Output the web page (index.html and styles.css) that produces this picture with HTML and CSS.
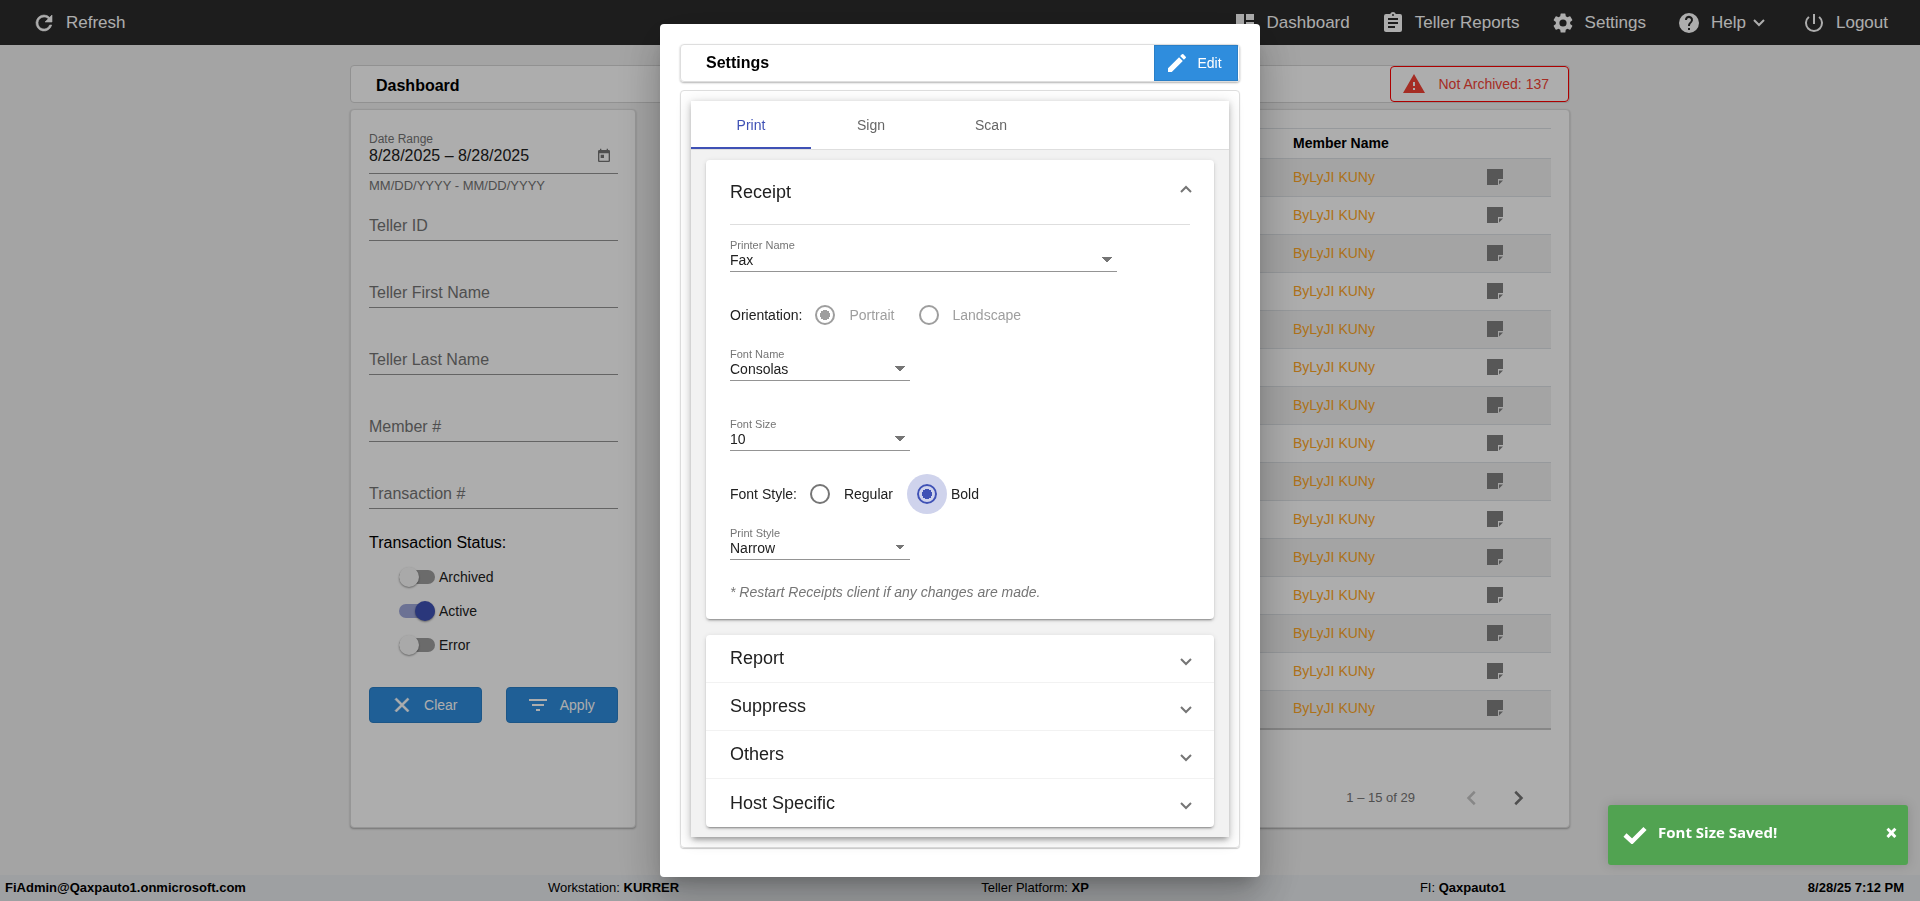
FILE: index.html
```html
<!DOCTYPE html>
<html lang="en">
<head>
    <meta charset="UTF-8">
    <meta name="viewport" content="width=device-width, initial-scale=1.0">
    <title>Dashboard</title>
    <link rel="stylesheet" href="styles.css">
</head>
<body>
    <svg class="sprite" aria-hidden="true">
        <symbol id="chevron" viewBox="0 0 12 8"><path d="M1 1l5 5 5-5" fill="none" stroke="currentColor" stroke-width="2"/></symbol>
        <symbol id="note" viewBox="0 0 16 16"><path d="M0 0h16v10h-5v6H0z"/><path d="M12 11.500h4L12 15.500z"/></symbol>
    </svg>

    <header class="navbar">
        <a class="nav-link" href="#">
            <svg class="icon refresh-icon" viewBox="0 0 24 24"><path stroke="currentColor" stroke-width=".6" d="M17.650 6.350A7.960 7.960 0 0 0 12 4a8 8 0 1 0 7.730 10h-2.080A6 6 0 1 1 12 6c1.660 0 3.140.69 4.220 1.780L13 11h7V4z"/></svg>
            Refresh
        </a>
        <nav class="nav-right">
            <a class="nav-link" href="#">
                <svg class="icon" viewBox="0 0 24 24"><path d="M3 13h8V3H3zm0 8h8v-6H3zm10 0h8V11h-8zm0-18v6h8V3z"/></svg>
                Dashboard
            </a>
            <a class="nav-link" href="#">
                <svg class="icon" viewBox="0 0 24 24"><path d="M19 3h-4.180A3 3 0 0 0 9.180 3H5a2 2 0 0 0-2 2v14c0 1.100.9 2 2 2h14a2 2 0 0 0 2-2V5a2 2 0 0 0-2-2zm-7 0a1 1 0 1 1 0 2 1 1 0 0 1 0-2zm2 14H7v-2h7zm3-4H7v-2h10zm0-4H7V7h10z"/></svg>
                Teller Reports
            </a>
            <a class="nav-link" href="#">
                <svg class="icon" viewBox="0 0 24 24"><path d="M19.140 12.940c.04-.3.060-.61.060-.94s-.02-.64-.07-.94l2.030-1.580a.49.49 0 0 0 .12-.61l-1.920-3.320a.49.49 0 0 0-.59-.22l-2.390.96a7 7 0 0 0-1.620-.94l-.36-2.540a.48.48 0 0 0-.48-.41h-3.840a.48.48 0 0 0-.47.41l-.36 2.540c-.59.24-1.130.57-1.620.94l-2.390-.96a.48.48 0 0 0-.59.22L2.740 8.870a.47.47 0 0 0 .12.61l2.030 1.580a6.200 6.200 0 0 0-.02 1.880l-2.030 1.580a.49.49 0 0 0-.12.61l1.920 3.320c.12.22.37.29.59.22l2.390-.96c.5.38 1.030.7 1.620.94l.36 2.540c.05.24.24.41.48.41h3.840c.24 0 .44-.17.47-.41l.36-2.540c.59-.24 1.130-.56 1.620-.94l2.390.96c.22.080.47 0 .59-.22l1.920-3.320a.47.47 0 0 0-.12-.61zM12 15.600a3.600 3.600 0 1 1 0-7.200 3.600 3.600 0 0 1 0 7.200z"/></svg>
                Settings
            </a>
            <a class="nav-link" href="#">
                <svg class="icon" viewBox="0 0 24 24"><path d="M12 2a10 10 0 1 0 0 20 10 10 0 0 0 0-20zm1 17h-2v-2h2zm2.070-7.750-.9.920C13.450 12.900 13 13.500 13 15h-2v-.5c0-1.100.45-2.100 1.170-2.830l1.240-1.260A2 2 0 1 0 10 9H8a4 4 0 1 1 7.070 2.250z"/></svg>
                <span class="with-caret">Help <svg class="chevron"><use href="#chevron"/></svg></span>
            </a>
            <a class="nav-link" href="#">
                <svg class="icon" viewBox="0 0 24 24"><path d="M13 3h-2v10h2zm4.830 2.170-1.420 1.420A7 7 0 1 1 7.580 6.580L6.170 5.170A9 9 0 1 0 17.830 5.170z"/></svg>
                Logout
            </a>
        </nav>
    </header>

    <main class="page">
        <div class="page-title">
            <h1 class="title">Dashboard</h1>
            <button class="btn-alert" type="button">
                <svg class="icon" viewBox="0 0 24 24"><path d="M1 21h22L12 2zm12-3h-2v-2h2zm0-4h-2v-4h2z"/></svg>
                Not Archived: 137
            </button>
        </div>
        <div class="columns">
            <form class="filters card">
                <div class="date-field">
                    <label class="date-label" for="range">Date Range</label>
                    <div class="date-row">
                        <input class="date-input" id="range" type="text" value="8/28/2025 – 8/28/2025">
                        <svg class="calendar" viewBox="0 0 24 24"><path d="M19 3h-1V1h-2v2H8V1H6v2H5a2 2 0 0 0-2 2v14c0 1.100.9 2 2 2h14a2 2 0 0 0 2-2V5a2 2 0 0 0-2-2zm0 16H5V8h14zM7 10h5v5H7z"/></svg>
                    </div>
                    <div class="hint">MM/DD/YYYY - MM/DD/YYYY</div>
                </div>
                <input class="field" type="text" placeholder="Teller ID" aria-label="Teller ID">
                <input class="field" type="text" placeholder="Teller First Name" aria-label="Teller First Name">
                <input class="field" type="text" placeholder="Teller Last Name" aria-label="Teller Last Name">
                <input class="field" type="text" placeholder="Member #" aria-label="Member #">
                <input class="field" type="text" placeholder="Transaction #" aria-label="Transaction #">
                <div class="status-title">Transaction Status:</div>
                <div class="toggles">
                    <label class="toggle"><input class="switch" type="checkbox">Archived</label>
                    <label class="toggle"><input class="switch" type="checkbox" checked>Active</label>
                    <label class="toggle"><input class="switch" type="checkbox">Error</label>
                </div>
                <div class="filter-buttons">
                    <button class="btn" type="button">
                        <svg class="icon" viewBox="0 0 24 24"><path stroke="currentColor" stroke-width=".6" d="M19 6.410 17.590 5 12 10.590 6.410 5 5 6.410 10.590 12 5 17.590 6.410 19 12 13.410 17.590 19 19 17.590 13.410 12z"/></svg>
                        Clear
                    </button>
                    <button class="btn" type="button">
                        <svg class="icon" viewBox="0 0 24 24"><path d="M10 18h4v-2h-4zM3 6v2h18V6zm3 7h12v-2H6z"/></svg>
                        Apply
                    </button>
                </div>
            </form>
            <section class="results card">
                <table class="table">
                    <thead>
                        <tr><th></th><th class="member">Member Name</th><th class="notes"></th></tr>
                    </thead>
                    <tbody id="rows"></tbody>
                </table>
                <div class="paginator">
                    <span>1 – 15 of 29</span>
                    <button class="page-btn prev" type="button" aria-label="Previous page" disabled><svg class="chevron"><use href="#chevron"/></svg></button>
                    <button class="page-btn next" type="button" aria-label="Next page"><svg class="chevron"><use href="#chevron"/></svg></button>
                </div>
            </section>
        </div>
    </main>

    <footer class="footer">
        <span><b>FiAdmin@Qaxpauto1.onmicrosoft.com</b></span>
        <span>Workstation: <b>KURRER</b></span>
        <span class="platform">Teller Platform: <b>XP</b></span>
        <span>FI: <b>Qaxpauto1</b></span>
        <span><b>8/28/25 7:12 PM</b></span>
    </footer>

    <div class="backdrop">
        <div class="dialog" role="dialog" aria-label="Settings">
            <div class="dialog-head">
                <h2 class="title">Settings</h2>
                <button class="btn btn-edit" type="button">
                    <svg class="icon" viewBox="0 0 24 24"><path d="M3 17.250V21h3.750L17.810 9.940l-3.750-3.750zM20.710 7.040a1 1 0 0 0 0-1.410l-2.340-2.340a1 1 0 0 0-1.410 0l-1.830 1.830 3.750 3.750z"/></svg>
                    Edit
                </button>
            </div>
            <div class="dialog-body">
                <div class="tab-group">
                    <div class="tabs" role="tablist">
                        <button class="tab active" type="button" role="tab">Print</button>
                        <button class="tab" type="button" role="tab">Sign</button>
                        <button class="tab" type="button" role="tab">Scan</button>
                    </div>
                    <div class="tab-body">
                        <section class="panel">
                            <button class="panel-head open" type="button">Receipt <svg class="chevron"><use href="#chevron"/></svg></button>
                            <div class="panel-content">
                                <div class="select-field wide">
                                    <label for="printer">Printer Name</label>
                                    <select id="printer"><option>Fax</option></select>
                                </div>
                                <div class="radio-row">
                                    <span>Orientation:</span>
                                    <label class="radio disabled"><input type="radio" name="orientation" checked disabled>Portrait</label>
                                    <label class="radio disabled"><input type="radio" name="orientation" disabled>Landscape</label>
                                </div>
                                <div class="select-field">
                                    <label for="font-name">Font Name</label>
                                    <select id="font-name"><option>Consolas</option></select>
                                </div>
                                <div class="select-field font-size">
                                    <label for="font-size">Font Size</label>
                                    <select id="font-size"><option>10</option></select>
                                </div>
                                <div class="radio-row">
                                    <span>Font Style:</span>
                                    <label class="radio"><input type="radio" name="style">Regular</label>
                                    <label class="radio"><input class="ripple" type="radio" name="style" checked>Bold</label>
                                </div>
                                <div class="select-field">
                                    <label for="print-style">Print Style</label>
                                    <select id="print-style"><option>Narrow</option></select>
                                </div>
                                <p class="restart-note">* Restart Receipts client if any changes are made.</p>
                            </div>
                        </section>
                        <section class="panel">
                            <button class="panel-head" type="button">Report <svg class="chevron"><use href="#chevron"/></svg></button>
                            <button class="panel-head" type="button">Suppress <svg class="chevron"><use href="#chevron"/></svg></button>
                            <button class="panel-head" type="button">Others <svg class="chevron"><use href="#chevron"/></svg></button>
                            <button class="panel-head" type="button">Host Specific <svg class="chevron"><use href="#chevron"/></svg></button>
                        </section>
                    </div>
                </div>
            </div>
        </div>
    </div>

    <div class="toast" role="alert">
        <svg class="toast-check" viewBox="0 0 24 18"><path d="M2 9l7 6.500L22 2.500" fill="none" stroke="currentColor" stroke-width="4.500"/></svg>
        <span class="toast-title">Font Size Saved!</span>
        <button class="toast-close" type="button" aria-label="Close">×</button>
    </div>

    <script>
        const rows = document.getElementById('rows');
        for (let i = 0; i < 15; i++) {
            rows.insertAdjacentHTML('beforeend',
                '<tr><td></td><td class="member"><a href="#">ByLyJI KUNy</a></td>' +
                '<td class="notes"><svg class="note"><use href="#note"/></svg></td></tr>');
        }
    </script>
</body>
</html>
```
FILE: styles.css
```css
* {
    box-sizing: border-box;
}
body {
    margin: 0;
    min-height: 100vh;
    display: flex;
    flex-direction: column;
    background-color: #f2f2f2;
    font-family: "Liberation Sans", Arial, sans-serif;
    font-size: 14px;
    color: #000;
}
button, input, select {
    font-family: inherit;
    font-size: inherit;
}
svg {
    fill: currentColor;
    flex-shrink: 0;
}
.sprite {
    position: absolute;
    width: 0;
    height: 0;
}
.icon {
    width: 24px;
    height: 24px;
}
.chevron {
    width: 12px;
    height: 8px;
}
.title {
    margin: 0;
    font-size: 16px;
    line-height: 20px;
}

/* top bar */
.navbar {
    display: flex;
    justify-content: space-between;
    align-items: center;
    height: 45px;
    padding: 0 32px;
    background-color: #2c2c2c;
}
.nav-right {
    display: flex;
    gap: 31px;
}
.nav-link {
    display: flex;
    align-items: center;
    gap: 10px;
    font-size: 17px;
    color: #fff;
    text-decoration: none;
}
.with-caret {
    display: flex;
    align-items: center;
    gap: 7px;
    padding-right: 6px;
}

/* page */
.page {
    flex: 1;
    display: flex;
    flex-direction: column;
    gap: 6px;
    width: 100%;
    max-width: 1220px;
    margin: 0 auto;
    padding: 20px 0 47px;
}
.page-title {
    display: flex;
    justify-content: space-between;
    height: 38px;
    padding-left: 25px;
    align-items: center;
    background-color: #fff;
    border: 1px solid #d6d6d6;
    border-radius: 4px;
}
.page-title .title {
    padding-top: 3px;
}
.btn-alert {
    display: flex;
    align-items: center;
    gap: 12px;
    height: 36px;
    padding: 0 19px 0 11px;
    background: none;
    border: 1px solid #f00;
    border-radius: 4px;
    color: #f44336;
}
.columns {
    flex: 1;
    display: flex;
    gap: 30px;
}
.card {
    background-color: #fff;
    border: 1px solid #dedede;
    border-radius: 4px;
    box-shadow: 0 1px 2px rgba(0, 0, 0, 0.3);
}

/* filters */
.filters {
    display: flex;
    flex-direction: column;
    flex-shrink: 0;
    width: 286px;
    padding: 22px 17px 22px 18px;
}
.date-label {
    display: block;
    font-size: 12px;
    line-height: 14px;
    color: #757575;
}
.date-row {
    display: flex;
    align-items: center;
    justify-content: space-between;
    height: 28px;
    padding: 0 6px 8px 0;
    border-bottom: 1px solid #949494;
}
.date-input {
    flex: 1;
    min-width: 0;
    padding: 0;
    border: none;
    background: none;
    font-size: 16px;
    color: #212121;
}
.calendar {
    width: 16px;
    height: 16px;
    color: #757575;
}
.hint {
    padding-top: 4px;
    font-size: 13px;
    line-height: 16px;
    color: #757575;
}
.field {
    height: 33px;
    margin-bottom: 34px;
    padding: 3px 0 0;
    border: none;
    border-bottom: 1px solid #949494;
    background: none;
    font-size: 16px;
}
.date-field {
    margin-bottom: 14px;
}
.field::placeholder {
    color: #757575;
    opacity: 1;
}
.status-title {
    margin-top: -10px;
    font-size: 16px;
    line-height: 20px;
}
.toggles {
    display: flex;
    flex-direction: column;
    gap: 10px;
    padding: 12px 0 30px 30px;
}
.toggle {
    display: flex;
    align-items: center;
    gap: 4px;
    height: 24px;
    color: #212121;
}
.switch {
    appearance: none;
    display: flex;
    align-items: center;
    width: 36px;
    height: 14px;
    margin: 0;
    border-radius: 7px;
    background-color: #9e9e9e;
}
.switch::before {
    content: "";
    width: 20px;
    height: 20px;
    border-radius: 50%;
    background-color: #fafafa;
    box-shadow: 0 1px 2px rgba(0, 0, 0, 0.4);
}
.switch:checked {
    justify-content: flex-end;
    background-color: #9fa8da;
}
.switch:checked::before {
    background-color: #3f51b5;
}
.filter-buttons {
    display: flex;
    gap: 24px;
}
.btn {
    flex: 1;
    display: flex;
    align-items: center;
    justify-content: center;
    gap: 10px;
    height: 36px;
    padding: 0 3px 0 0;
    background-color: #2f8ddd;
    border: 1px solid #2a7fc7;
    border-radius: 4px;
    color: #fff;
}

/* results */
.results {
    flex: 1;
    padding: 18px 18px 0;
}
.table {
    width: 100%;
    border-collapse: collapse;
    border-top: 1px solid #dee2e6;
    border-bottom: 2px solid #c8c8c8;
}
.table th {
    height: 30px;
    padding: 0 0 2px;
    text-align: left;
}
.table td {
    height: 38px;
    padding: 0 0 2px;
    border-top: 1px solid #dee2e6;
}
.table tbody tr:nth-child(odd) {
    background-color: #f2f2f2;
}
.member {
    width: 194px;
}
.notes {
    width: 64px;
}
.member a {
    color: #ffa726;
    text-decoration: none;
}
.note {
    display: block;
    width: 16px;
    height: 16px;
    color: #808080;
}
.paginator {
    display: flex;
    align-items: center;
    justify-content: flex-end;
    height: 40px;
    margin-top: 48px;
    padding-right: 8px;
    font-size: 13px;
    color: #757575;
}
.page-btn {
    display: flex;
    align-items: center;
    justify-content: center;
    width: 48px;
    height: 40px;
    border: none;
    background: none;
    color: #757575;
}
.paginator span {
    padding-right: 32px;
}
.page-btn .chevron {
    width: 16px;
    height: 10px;
}
.page-btn:disabled {
    color: #c8c8c8;
}
.prev .chevron {
    transform: rotate(90deg);
}
.next .chevron {
    transform: rotate(-90deg);
}

/* footer */
.footer {
    display: flex;
    justify-content: space-between;
    height: 26px;
    padding: 0 16px 0 5px;
    background-color: #e9ecef;
    font-size: 13px;
    line-height: 25px;
}
.platform {
    padding-right: 29px;
}

/* dialog */
.backdrop {
    position: fixed;
    inset: 0;
    display: flex;
    align-items: center;
    justify-content: center;
    background-color: rgba(0, 0, 0, 0.32);
}
.dialog {
    display: flex;
    flex-direction: column;
    gap: 8px;
    width: 600px;
    padding: 20px 20px 29px;
    background-color: #fff;
    border-radius: 4px;
    box-shadow: 0 11px 15px -7px rgba(0, 0, 0, 0.2), 0 24px 38px 3px rgba(0, 0, 0, 0.14), 0 9px 46px 8px rgba(0, 0, 0, 0.12);
}
.dialog-head {
    display: flex;
    align-items: center;
    justify-content: space-between;
    padding-left: 25px;
    padding-right: 1px;
    border: 1px solid #dedede;
    border-radius: 4px;
    box-shadow: 0 1px 2px rgba(0, 0, 0, 0.3);
}
.btn-edit {
    flex: none;
    width: 84px;
    gap: 8px;
    padding-right: 5px;
    border-radius: 0;
}
.dialog-body {
    padding: 10px;
    border: 1px solid #dedede;
    border-radius: 4px;
    box-shadow: 0 1px 1px rgba(0, 0, 0, 0.2);
}
.tab-group {
    background-color: #f2f2f2;
    box-shadow: 0 5px 5px -3px rgba(0, 0, 0, 0.2), 0 3px 14px 2px rgba(0, 0, 0, 0.12), 0 2px 6px rgba(0, 0, 0, 0.2);
}
.tabs {
    display: flex;
    background-color: #fff;
    border-bottom: 1px solid #dedede;
}
.tab {
    width: 120px;
    height: 48px;
    padding: 0;
    border: none;
    background: none;
    color: #666;
}
.tab.active {
    padding-top: 2px;
    border-bottom: 2px solid #3f51b5;
    color: #3f51b5;
}
.tab-body {
    display: flex;
    flex-direction: column;
    gap: 16px;
    padding: 10px 15px;
}
.panel {
    background-color: #fff;
    border-radius: 4px;
    box-shadow: 0 3px 1px -2px rgba(0, 0, 0, 0.2), 0 2px 2px rgba(0, 0, 0, 0.14), 0 1px 5px rgba(0, 0, 0, 0.12);
}
.panel-head {
    display: flex;
    align-items: center;
    justify-content: space-between;
    width: 100%;
    height: 48px;
    padding: 0 22px 0 24px;
    border: none;
    border-bottom: 1px solid #f2f2f2;
    background: none;
    font-size: 18px;
    color: #212121;
}
.panel-head:last-child {
    border-bottom: none;
}
.panel-head .chevron {
    margin-top: 6px;
    color: #757575;
}
.panel-head.open {
    height: 64px;
    border: none;
}
.open .chevron {
    margin: 0 0 6px;
    transform: rotate(180deg);
}
.panel-content {
    display: flex;
    flex-direction: column;
    margin: 0 24px;
    padding: 14px 0 10px;
    border-top: 1px solid #dedede;
    color: #212121;
}
.select-field {
    display: flex;
    flex-direction: column;
    width: 180px;
    border-bottom: 1px solid #949494;
}
.select-field.wide {
    width: 387px;
}
.select-field label {
    font-size: 11px;
    line-height: 12px;
    color: #757575;
}
.select-field select {
    appearance: none;
    height: 20px;
    padding: 0 0 3px;
    border: none;
    background: conic-gradient(from -45deg at 50% 100%, #757575 90deg, transparent 0) right 5px top 6px / 10px 5px no-repeat;
    color: #212121;
}
.font-size {
    margin-top: 37px;
}
.radio-row {
    display: flex;
    align-items: center;
    height: 40px;
    margin: 23px 0 13px;
}
.radio {
    display: flex;
    align-items: center;
    gap: 14px;
    margin-right: 11px;
}
.radio input {
    appearance: none;
    width: 20px;
    height: 20px;
    margin: 0 0 0 13px;
    border: 2px solid #757575;
    border-radius: 50%;
}
.radio input:checked {
    border-color: #3f51b5;
    background: radial-gradient(#3f51b5 5px, transparent 5px);
}
.radio.disabled, .radio input:disabled {
    color: #9e9e9e;
    border-color: #9e9e9e;
}
.radio input:checked:disabled {
    background: radial-gradient(#9e9e9e 5px, transparent 5px);
}
.radio input.ripple {
    background: radial-gradient(#3f51b5 5px, #cfd3ec 5px);
    box-shadow: 0 0 0 10px #cfd3ec;
}
.restart-note {
    margin: 0;
    padding: 23px 0 8px;
    font-style: italic;
    line-height: 18px;
    color: #757575;
}

/* toast */
.toast {
    position: fixed;
    right: 12px;
    bottom: 36px;
    display: flex;
    align-items: center;
    gap: 11px;
    width: 300px;
    height: 60px;
    padding: 0 10px 6px 15px;
    background-color: #51a351;
    border-radius: 3px;
    box-shadow: 0 0 12px rgba(0, 0, 0, 0.15);
    color: #fff;
    font-family: "Open Sans", "Segoe UI", sans-serif;
    font-size: 15px;
    font-weight: bold;
}
.toast-check {
    width: 24px;
    height: 18px;
    margin-top: 6px;
}
.toast-title {
    flex: 1;
}
.toast-close {
    padding: 0;
    border: none;
    background: none;
    font-size: 22px;
    line-height: 22px;
    font-weight: 800;
    color: #fff;
}
```
